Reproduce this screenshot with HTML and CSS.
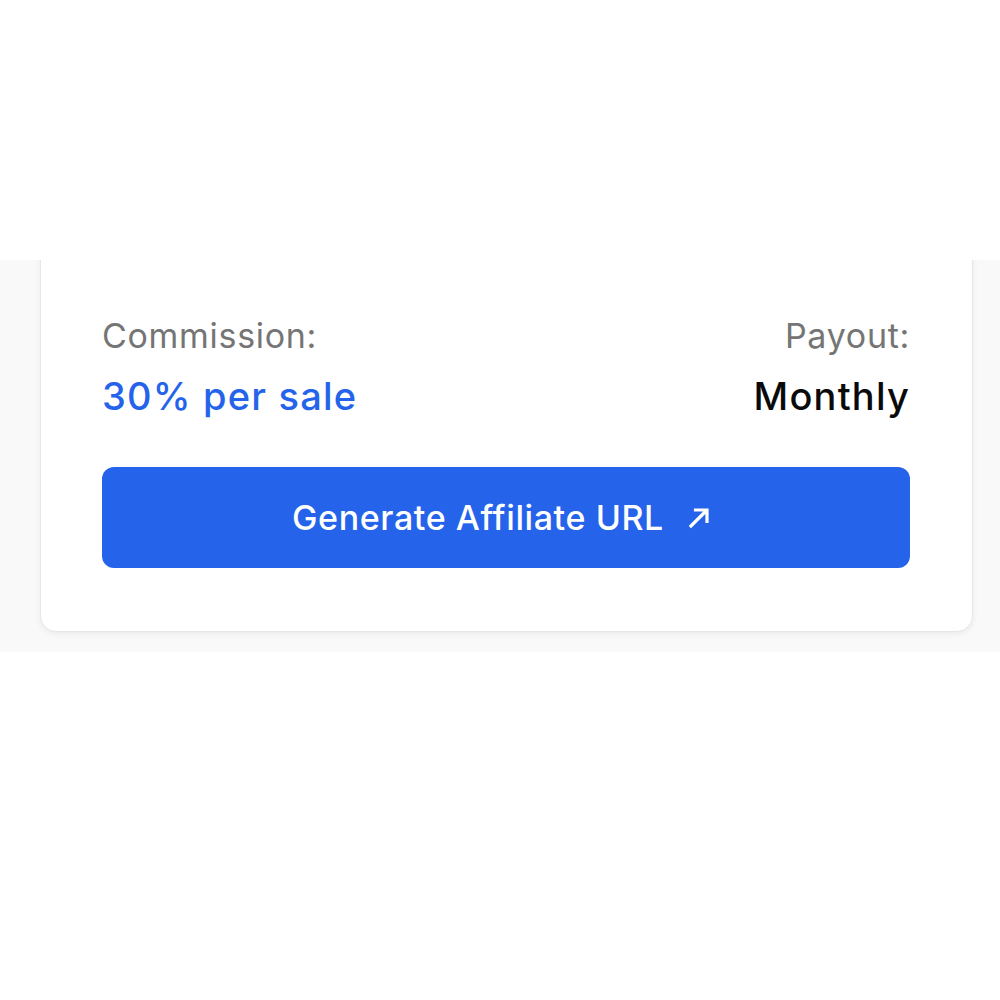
FILE: index.html
```html
<!DOCTYPE html>
<html>
<head>
<meta charset="utf-8">
<link rel="stylesheet" href="styles.css">
</head>
<body>
<div class="top"></div>
<section class="band">
  <div class="card">
    <div class="row">
      <div class="col">
        <div class="label">Commission:</div>
        <div class="value blue">30% per sale</div>
      </div>
      <div class="col right">
        <div class="label">Payout:</div>
        <div class="value">Monthly</div>
      </div>
    </div>
    <button class="btn"><span class="btn-text">Generate Affiliate URL</span>
      <svg class="arrow" width="22" height="22" viewBox="0 0 22 22" fill="none" stroke="#fff" stroke-width="3.2" stroke-linecap="square" stroke-linejoin="miter"><path d="M3 19L18.5 3.5M7.5 3h11.5v11.5"/></svg>
    </button>
  </div>
</section>
</body>
</html>
```

FILE: styles.css
```css
html, body { margin: 0; padding: 0; background: #fff; }
body { font-family: Inter, "Noto Sans", sans-serif; }
.top { height: 260px; }
.band {
  background: #f9f9f9;
  height: 392px;
  overflow: hidden;
  padding: 0 27px 0 40px;
  box-sizing: border-box;
}
.card {
  margin-top: -30px;
  background: #fff;
  border: 1px solid #e6e6e6;
  border-radius: 16px;
  box-shadow: 0 2px 6px rgba(0,0,0,0.06);
  padding: 84px 62px 63px 61px;
}
.row { display: flex; justify-content: space-between; }
.col { display: flex; flex-direction: column; gap: 16px; }
.col.right { align-items: flex-end; }
.label { font-size: 34px; line-height: 42px; color: #757575; letter-spacing: 0.7px; }
.value { font-size: 38px; line-height: 46px; color: #0a0a0a; letter-spacing: 1.2px; font-weight: 450; }
.value.blue { color: #2563eb; }
.btn {
  margin-top: 48px;
  width: 100%;
  height: 101px;
  border: none;
  border-radius: 12px;
  background: #2563eb;
  color: #fff;
  font-family: Inter, "Noto Sans", sans-serif;
  font-size: 34px;
  font-weight: 450;
  letter-spacing: 0.6px;
  display: flex;
  align-items: center;
  justify-content: center;
  gap: 24px;
  padding: 0 10px 0 0;
}
.arrow { display: block; }
```
